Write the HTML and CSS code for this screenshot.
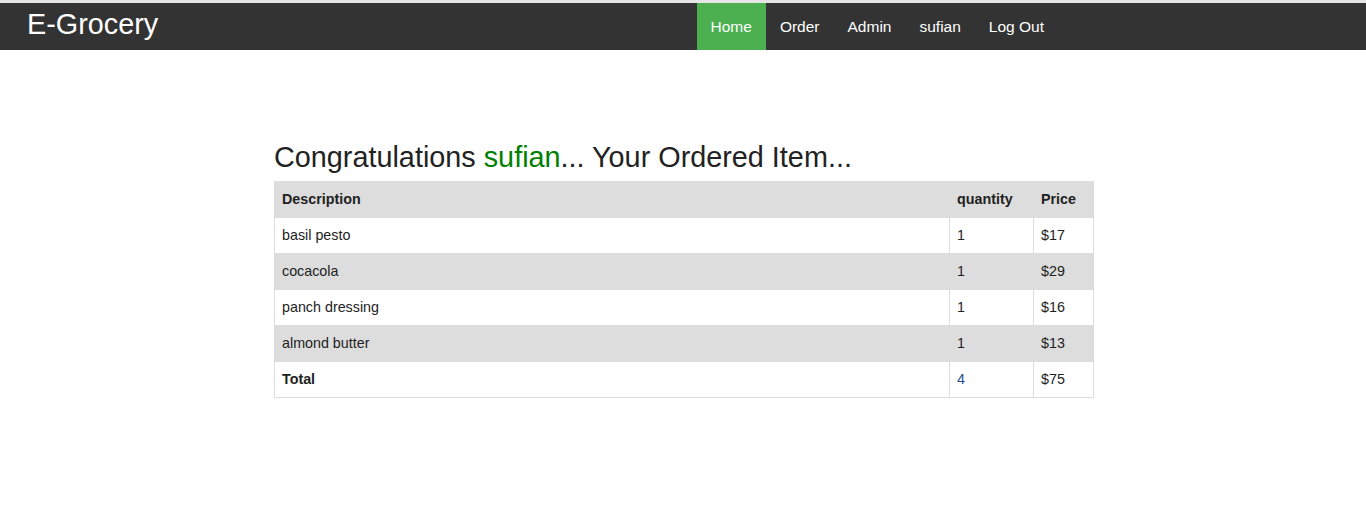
FILE: index.html
```html
<!DOCTYPE html>
<html>
<head>
<meta charset="utf-8">
<link rel="stylesheet" href="styles.css">
</head>
<body>
<header class="topbar">
  <div class="brand">E-Grocery</div>
  <nav class="menu">
    <a class="item active" href="#">Home</a>
    <a class="item" href="#">Order</a>
    <a class="item" href="#">Admin</a>
    <a class="item" href="#">sufian</a>
    <a class="item" href="#">Log Out</a>
  </nav>
</header>
<main class="content">
  <h2 class="title">Congratulations <span class="user">sufian</span>... Your Ordered Item...</h2>
  <table class="orders">
    <thead>
      <tr><th class="c-desc">Description</th><th class="c-qty">quantity</th><th class="c-price">Price</th></tr>
    </thead>
    <tbody>
      <tr><td>basil pesto</td><td>1</td><td>$17</td></tr>
      <tr><td>cocacola</td><td>1</td><td>$29</td></tr>
      <tr><td>panch dressing</td><td>1</td><td>$16</td></tr>
      <tr><td>almond butter</td><td>1</td><td>$13</td></tr>
      <tr class="total"><td class="t-label">Total</td><td class="t-qty">4</td><td>$75</td></tr>
    </tbody>
  </table>
</main>
</body>
</html>
```
FILE: styles.css
```css
html, body {
  margin: 0;
  padding: 0;
  background: #fff;
  font-family: "Liberation Sans", Arial, sans-serif;
  color: #222;
}
.topbar {
  display: flex;
  align-items: stretch;
  height: 47px;
  background: #333;
  border-top: 3px solid #e5e5e5;
}
.brand {
  color: #fff;
  font-size: 28.8px;
  line-height: 43px;
  padding-left: 27px;
}
.menu {
  display: flex;
  margin-left: auto;
  padding-right: 308px;
}
.item {
  display: block;
  color: #fff;
  text-decoration: none;
  font-size: 15.5px;
  line-height: 47px;
  padding: 0 14px;
}
.item.active {
  background: #4caf50;
}
.content {
  width: 820px;
  margin-left: calc(50% - 409px);
  padding-top: 90px;
}
.title {
  font-weight: normal;
  font-size: 28.8px;
  line-height: 34px;
  margin: 0 0 7px 0;
  color: #222;
}
.user {
  color: #008000;
}
.orders {
  width: 820px;
  border-collapse: collapse;
  font-size: 14.3px;
  border: 1px solid #ddd;
}
.orders th, .orders td {
  height: 34px;
  padding: 0 7px 1px 7px;
  text-align: left;
  border: 1px solid #ddd;
  color: #222;
}
.orders th {
  font-weight: bold;
  background: #ddd;
}
.orders tbody tr:nth-child(even) td {
  background: #ddd;
}
.c-desc { width: auto; }
.c-qty { width: 69px; }
.c-price { width: 45px; }
.t-label { font-weight: bold; }
.orders td.t-qty { color: #1f4e8c; }
```
